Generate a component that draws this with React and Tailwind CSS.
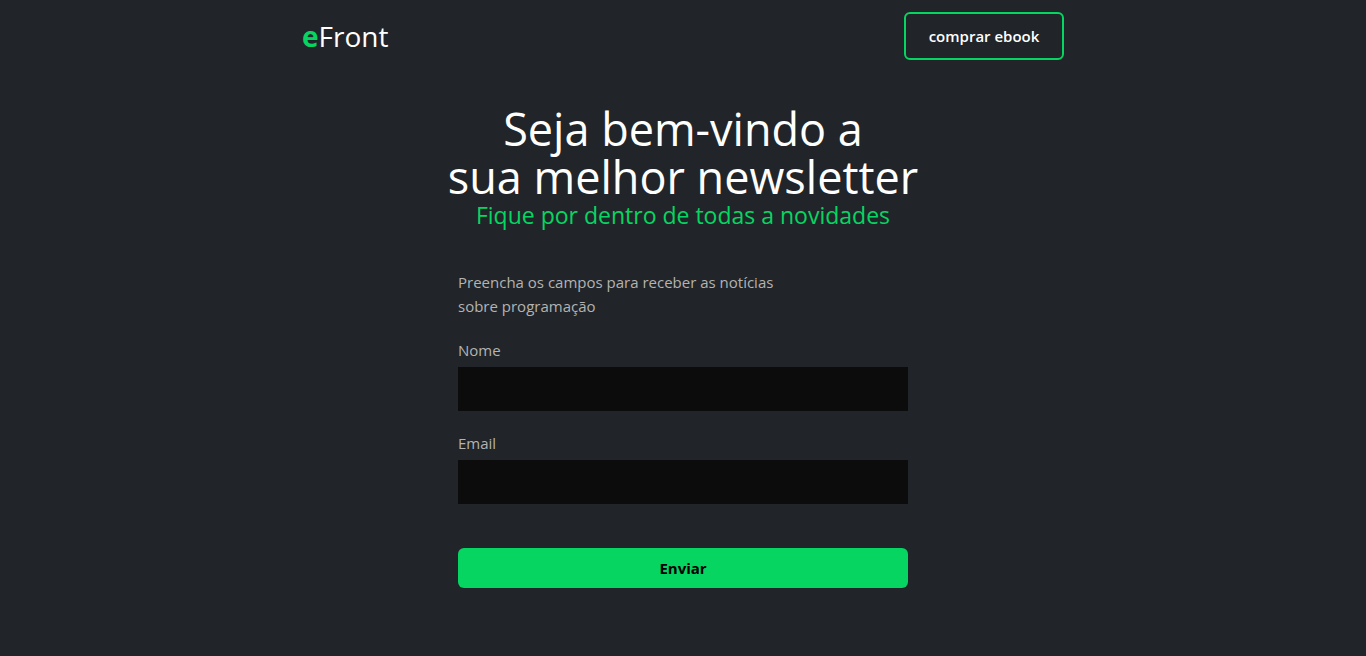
import React from "react";

function Field({ id, label, type, autoComplete }) {
  return (
    <div className="flex flex-col gap-[5px]">
      <label htmlFor={id}>{label}</label>
      <input
        id={id}
        name={id}
        type={type}
        autoComplete={autoComplete}
        className="h-11 w-full bg-[#0c0c0c] px-3 text-white outline-none focus:ring-2 focus:ring-[#06d562]"
      />
    </div>
  );
}

export default function App() {
  return (
    <div className="min-h-screen bg-[#212529] font-['Open_Sans','Noto_Sans',sans-serif] text-[15px] leading-6 text-[#b3b3b3]">
      <header className="mx-auto flex w-full max-w-[762px] items-center justify-between py-3">
        <a href="#" className="text-[28px] leading-10 text-white">
          <span className="font-bold text-[#06d562]">e</span>Front
        </a>
        <button
          type="button"
          className="h-12 w-40 rounded-md border-2 border-[#06d562] font-semibold text-white"
        >
          comprar ebook
        </button>
      </header>

      <main className="px-4 pt-[33px] pb-16">
        <div className="text-center">
          <h1 className="text-[45px] leading-[48px] text-white">
            Seja bem-vindo a
            <br />
            sua melhor newsletter
          </h1>
          <p className="text-[23px] leading-[29px] text-[#06d562]">
            Fique por dentro de todas a novidades
          </p>
        </div>

        <form className="mx-auto mt-10 flex w-full max-w-[450px] flex-col gap-5">
          <p>
            Preencha os campos para receber as notícias
            <br />
            sobre programação
          </p>
          <Field id="nome" label="Nome" type="text" autoComplete="name" />
          <Field id="email" label="Email" type="email" autoComplete="email" />
          <button
            type="button"
            className="mt-6 h-10 w-full rounded-md bg-[#06d562] font-bold text-black"
          >
            Enviar
          </button>
        </form>
      </main>
    </div>
  );
}
